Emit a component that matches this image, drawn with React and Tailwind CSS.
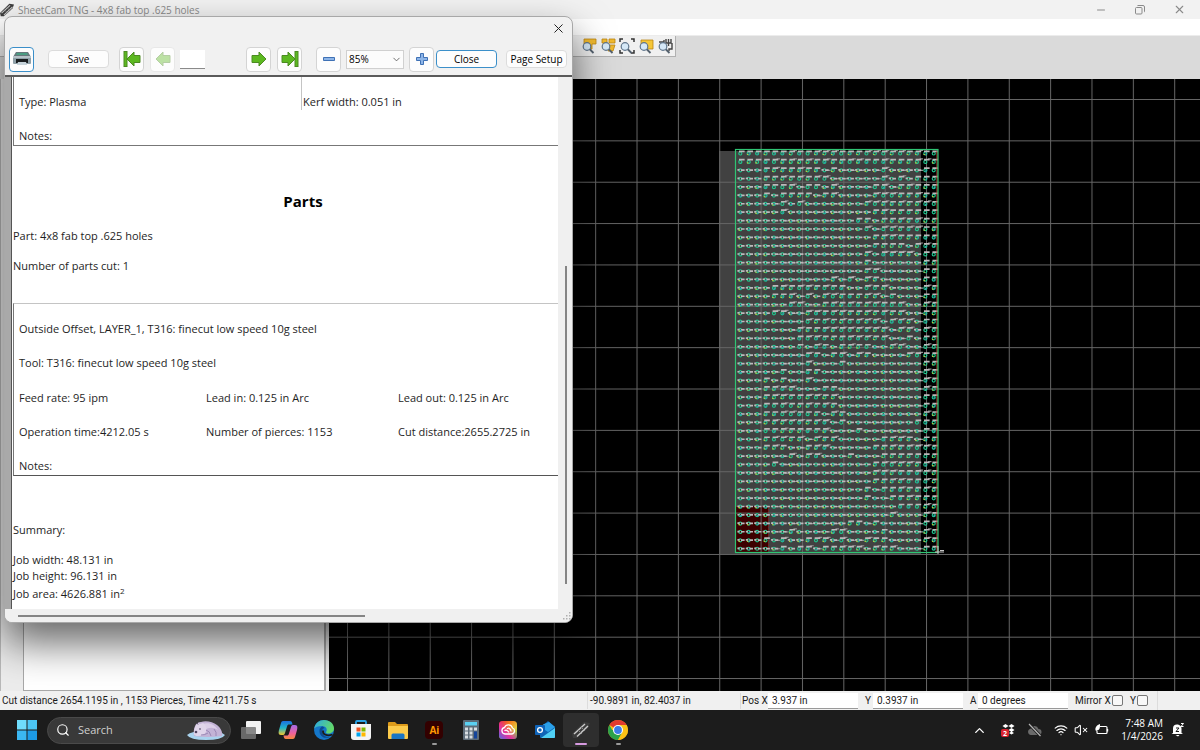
import { Minus, X, ChevronUp, ChevronDown, Wifi, VolumeX, CloudOff, Search } from 'lucide-react'

const COLS = 24
const ROWS = 48
const PITCH = 8.41

const noise = (a, b) => {
  const n = Math.sin(a * 12.9898 + b * 78.233) * 43758.5453
  return n - Math.floor(n)
}

// label ticks sit above the hole in some places and beside it in others
function buildHoles() {
  const out = { rings: '', labels: '', joins: '', yellow: '', blue: '' }
  for (let r = 0; r < ROWS; r++) {
    for (let c = 0; c < COLS; c++) {
      const x = 411 + c * PITCH
      const y = 74.5 + r * PITCH
      const wave = Math.sin(c / 3.2 + r / 5) + Math.cos(r / 2.4 - c / 7) + (noise(r + 3, c) - 0.5) * 2
      const above = r < 2 || c > 21 || (c > 2 && wave > 0.3)
      out.rings += `M${x - 1.2} ${y}a1.5 1.5 0 1 0 3 0a1.5 1.5 0 1 0 -3 0`
      out.labels += above ? `M${x - 1} ${y - 2.2}h5.6` : `M${x - 2.6} ${y - 0.4}h2.2M${x + 1} ${y - 0.2}h3.6`
      if (c > 3 && c < 23 && noise(r, c) > 0.5) out.joins += `M${x + 3} ${y - (above ? 3 : 0)}h3.5`
      if (noise(c, r) > 0.5) out.yellow += `M${x - 1.5} ${y + 1}h1.6`
      if (noise(c + 9, r) > 0.6) out.blue += `M${x} ${y + 0.5}h1.6`
    }
  }
  return out
}

const HOLES = buildHoles()

function Canvas() {
  return (
    <svg className="block h-full w-full" role="img" aria-label="Part layout">
      <defs>
        <pattern id="grid" x="18" y="20" width="41.36" height="41.36" patternUnits="userSpaceOnUse">
          <path d="M0.5 0V41.36M0 0.5H41.36" stroke="#666" strokeWidth="1" fill="none" />
        </pattern>
      </defs>
      <rect width="100%" height="100%" fill="#000" />
      <rect x="390" y="72" width="202" height="403" fill="#414141" />
      <rect x="407" y="427" width="32" height="46" fill="#3d0000" />
      <path d="M407 427.5H439.5V473" stroke="#7a2020" strokeDasharray="2 1" fill="none" />
      <rect width="100%" height="100%" fill="url(#grid)" />
      <path d={HOLES.joins} stroke="#8f8f8f" strokeWidth="1.2" fill="none" />
      <path d={HOLES.rings} stroke="#1fc48c" strokeWidth="1.2" fill="none" />
      <path d={HOLES.labels} stroke="#bcb8ba" strokeWidth="1.7" fill="none" />
      <path d={HOLES.yellow} stroke="#b5c93c" strokeWidth="1.2" fill="none" />
      <path d={HOLES.blue} stroke="#2c9bb8" strokeWidth="1.2" fill="none" />
      <path d="M608 72V473" stroke="#c23a32" strokeWidth="1" />
      <rect x="406.5" y="70.5" width="202.500" height="403" fill="none" stroke="#2fc473" strokeWidth="1.2" />
      <path d="M609 467v8M606 473h9M611 471.5h4" stroke="#c8c8c8" strokeWidth="1" fill="none" />
    </svg>
  )
}

function SheetCamIcon({ size = 14 }) {
  return (
    <svg width={size} height={size} viewBox="0 0 18 18">
      <path d="M0 13 12 1l6 1-2 5L5 17H1z" fill="#3c3c3c" />
      <path d="M2 13 13 3M5 15.500 16 5" stroke="#c9c9c9" strokeWidth="1.400" />
      <path d="m6 9 4 4M9 6l4 4" stroke="#8a8a8a" strokeWidth="1" />
    </svg>
  )
}

function PrinterIcon() {
  return (
    <svg width="20" height="16" viewBox="0 0 20 16">
      <path d="M4 1h12l3 5H1z" fill="#66777c" />
      <path d="M5 2h10l1 2H4z" fill="#4a9c82" />
      <rect x="1" y="5" width="18" height="8" rx="1" fill="#8fa0a8" />
      <path d="M1 6h18" stroke="#dce4e8" />
      <rect x="4" y="8" width="12" height="4" fill="#1a1e20" />
      <path d="M6 11h8l1 3H5z" fill="#c6d3da" />
    </svg>
  )
}

function GreenArrow({ left, bar }) {
  return (
    <svg width="18" height="18" viewBox="0 0 18 18">
      <g transform={left ? 'translate(18 0) scale(-1 1)' : undefined} stroke="#4c8a22" strokeWidth="1">
        <path d={bar ? 'M1 5.500h6V2l7 7-7 7v-3.500H1z' : 'M2 5.500h7V2l7 7-7 7v-3.500H2z'} fill="#5cb820" />
        {bar && <rect x="14" y="1.5" width="3" height="15" fill="#5cb820" />}
      </g>
    </svg>
  )
}

function PlusMinus({ plus }) {
  return (
    <svg width="14" height="14" viewBox="0 0 14 14">
      <path
        d={plus ? 'M5.5 1.5h3v4h4v3h-4v4h-3v-4h-4v-3h4z' : 'M1.5 5.5h11v3h-11z'}
        fill="#8db5e8" stroke="#3f71b5"
      />
    </svg>
  )
}

const ZOOM_SHAPES = {
  part: <path d="M3 1h12v5h-4v5H7V6H3z" fill="#f0b92e" stroke="#b98412" strokeWidth=".8" />,
  parts: <path d="M2 1h5v4H2zM9 1h6v4H9zM8 7h7l-2 6H8z" fill="#f0b92e" stroke="#b98412" strokeWidth=".8" />,
  extents: <path d="M1 4V1h3M12 1h3v3M15 12v3h-3M4 15H1v-3" fill="none" stroke="#333" strokeWidth="1.5" />,
  sheet: <path d="M3 2h12v9H3z" fill="#f5c637" stroke="#b98412" strokeWidth=".8" />,
  machine: <path d="M2 4h5V2M9 1v4h5V1M11.500 1v7M15 5v6h-3v2" fill="none" stroke="#444" strokeWidth="1.400" />,
}

function ZoomIcon({ kind }) {
  return (
    <svg width="16" height="16" viewBox="0 0 16 16">
      {ZOOM_SHAPES[kind]}
      <path d="m8.500 11 4 4" stroke="#54616e" strokeWidth="1.8" />
      <circle cx="6" cy="8.500" r="3.800" fill="#d5e8f7" stroke="#60768c" strokeWidth="1.200" />
    </svg>
  )
}

const iconBtn = 'flex h-[25px] w-[25px] shrink-0 items-center justify-center rounded border bg-[#fdfdfd]'
const textBtn = 'h-[18px] w-[61px] shrink-0 whitespace-nowrap rounded border bg-[#fdfdfd] text-[10px] leading-4 text-black'

function PreviewToolbar() {
  return (
    <div className="flex h-[34px] items-center border-b-2 border-[#5a5a5a] pl-1">
      <button aria-label="Print" className={`${iconBtn} border-[#3b8fc9]`}><PrinterIcon /></button>
      <button className={`${textBtn} ml-3.5 border-[#dcdcdc]`}>Save</button>
      <button aria-label="First page" className={`${iconBtn} ml-2.5 border-[#d4d4d4]`}><GreenArrow left bar /></button>
      <button aria-label="Previous page" disabled className={`${iconBtn} ml-1.5 border-[#e8e8e8]`}>
        <span className="opacity-40"><GreenArrow left /></span>
      </button>
      <input aria-label="Page" className="ml-[5px] h-[19px] w-[25px] border-b border-[#8a8a8a] bg-white text-[10px]" />
      <button aria-label="Next page" className={`${iconBtn} ml-[41px] border-[#d4d4d4]`}><GreenArrow /></button>
      <button aria-label="Last page" className={`${iconBtn} ml-1.5 border-[#d4d4d4]`}><GreenArrow bar /></button>
      <button aria-label="Zoom out" className={`${iconBtn} ml-3.5 border-[#d4d4d4]`}><PlusMinus /></button>
      <div className="relative ml-[5px] shrink-0">
        <select aria-label="Zoom" className="block h-[19px] w-[58px] appearance-none border border-[#d0d0d0] bg-[#fcfcfc] pl-0.5 text-[10px] leading-4 text-black">
          <option>85%</option>
        </select>
        <ChevronDown size={11} strokeWidth={1.8} className="pointer-events-none absolute right-0.5 top-1 text-[#555]" />
      </div>
      <button aria-label="Zoom in" className={`${iconBtn} ml-[5px] border-[#d4d4d4]`}><PlusMinus plus /></button>
      <button className={`${textBtn} ml-0.5 border-[#3b8fc9]`}>Close</button>
      <button className={`${textBtn} ml-[9px] border-[#dcdcdc]`}>Page Setup</button>
    </div>
  )
}

function Report() {
  return (
    <div className="min-w-0 flex-1 border-l border-[#555] bg-white pl-px text-[11px] leading-4 text-[#1e1e1e]">
      <div className="border-b border-l border-[#777] pl-[5px]">
        <div className="grid grid-cols-[282px_1fr]">
          <p className="pt-[17px]">Type: Plasma</p>
          <p className="border-l border-[#c4c4c4] pl-px pt-[17px]">Kerf width: 0.051 in</p>
        </div>
        <p className="mt-[18px] pb-px">Notes:</p>
      </div>

      <h2 className="mt-[43px] pl-[35px] text-center text-[15px] font-bold leading-6 text-black">Parts</h2>
      <p className="mt-[15px]">Part: 4x8 fab top .625 holes</p>
      <p className="mt-3.5">Number of parts cut: 1</p>

      <div className="mt-[29px] space-y-[18px] border border-r-0 border-b-[#555] border-l-[#777] border-t-[#c4c4c4] pl-[5px] pt-[17px]">
        <p>Outside Offset, LAYER_1, T316: finecut low speed 10g steel</p>
        <p>Tool: T316: finecut low speed 10g steel</p>
        <div className="grid grid-cols-[187px_192px_1fr] gap-y-[18px] pt-px">
          <p>Feed rate: 95 ipm</p>
          <p>Lead in: 0.125 in Arc</p>
          <p>Lead out: 0.125 in Arc</p>
          <p>Operation time:4212.05 s</p>
          <p>Number of pierces: 1153</p>
          <p>Cut distance:2655.2725 in</p>
        </div>
        <p className="pb-px">Notes:</p>
      </div>

      <p className="mt-[46px]">Summary:</p>
      <p className="mt-3.5">Job width: 48.131 in</p>
      <p>Job height: 96.131 in</p>
      <p className="mt-0.5">Job area: 4626.881 in<sup className="text-[8px] leading-none">2</sup></p>
    </div>
  )
}

function PreviewDialog() {
  return (
    <section
      aria-label="Print preview"
      className="absolute left-1 top-4 flex h-[607px] w-[569px] flex-col overflow-hidden rounded-lg border border-[#a8a8a8] bg-[#f1f1f1] shadow-[0_20px_40px_rgba(0,0,0,0.6)]"
    >
      <div className="flex h-[26px] shrink-0 items-end justify-end pr-1.5 pb-[7px]">
        <button aria-label="Close window"><X size={15} strokeWidth={1.6} className="text-[#222]" /></button>
      </div>
      <PreviewToolbar />
      <div className="flex min-h-0 flex-1">
        <div className="w-1.5 bg-[#a9a9a9]" />
        <Report />
        <div className="w-3.5 bg-[#f0f0f0] pl-[7px] pt-[189px]">
          <div className="h-[318px] w-0.5 bg-[#858585]" />
        </div>
      </div>
      <div className="flex h-[13px] shrink-0 items-center justify-between bg-[#f0f0f0] pl-[13px]">
        <div className="h-0.5 w-[347px] bg-[#858585]" />
        <svg width="10" height="10" viewBox="0 0 10 10" fill="#b0b0b0">
          <path d="M7 1h1.500v1.500H7zM4 4h1.500v1.500H4zM7 4h1.500v1.500H7zM1 7h1.500v1.500H1zM4 7h1.500v1.500H4zM7 7h1.500v1.500H7z" />
        </svg>
      </div>
    </section>
  )
}

function StatusField({ label, value, width }) {
  return (
    <label className="flex items-center">
      <span className={width}>{label}</span>
      <input defaultValue={value} className="h-4 w-[90px] border-b border-[#999] bg-white pl-1 pt-px" />
    </label>
  )
}

function StatusBar() {
  return (
    <footer className="flex h-[19px] shrink-0 items-center whitespace-nowrap bg-[#f0f0f0] font-['Roboto',sans-serif] text-[10px] leading-4 text-[#1a1a1a]">
      <div className="flex-1 pl-0.5 pt-px">Cut distance 2654.1195 in , 1153 Pierces, Time 4211.75 s</div>
      <div className="w-[153px] border-l border-[#dcdcdc] pl-0.5 pt-px">-90.9891 in, 82.4037 in</div>
      <div className="flex w-[417px] gap-[7px] border-l border-[#dcdcdc] pl-px">
        <StatusField label="Pos X" value="3.937 in" width="w-[26px]" />
        <StatusField label="Y" value="0.3937 in" width="w-2" />
        <StatusField label="A" value="0 degrees" width="w-2" />
        <label className="flex items-center">
          <span className="w-[37px]">Mirror X</span>
          <input type="checkbox" className="h-[11px] w-[11px] appearance-none rounded-[2px] border border-[#777] bg-[#f8f8f8]" />
        </label>
        <label className="flex items-center">
          <span className="w-[7px]">Y</span>
          <input type="checkbox" className="h-[11px] w-[11px] appearance-none rounded-[2px] border border-[#777] bg-[#f8f8f8]" />
        </label>
      </div>
      <div className="h-full w-[43px] border-l border-[#dcdcdc]" />
    </footer>
  )
}

const APPS = [
  { name: 'Task view', icon: (
    <svg width="20" height="20" viewBox="0 0 20 20">
      <rect x="5" y="1" width="15" height="13" rx="1" fill="#f2f2f2" />
      <rect x="0" y="7" width="15" height="12" rx="1" fill="#777" fillOpacity=".85" />
    </svg>
  ) },
  { name: 'Copilot', icon: (
    <svg width="20" height="20" viewBox="0 0 20 20">
      <defs>
        <linearGradient id="cpA" x1="0" y1="0" x2="0" y2="1"><stop stopColor="#1b6fe0" /><stop offset=".5" stopColor="#22b6c8" /><stop offset="1" stopColor="#f2c52c" /></linearGradient>
        <linearGradient id="cpB" x1="0" y1="0" x2="0" y2="1"><stop stopColor="#a36be8" /><stop offset=".6" stopColor="#f0619a" /><stop offset="1" stopColor="#f58a3c" /></linearGradient>
      </defs>
      <path d="M5 1h7c2 0 2 1.500 2.500 3.500H11c-1 0-1.600.6-2 2L7 13c-.5 1.500-1 2-2.500 2H3C0 15 .5 12 1 10l2-7c.4-1.300 1-2 2-2z" fill="url(#cpA)" />
      <path d="M15 19H8c-2 0-2-1.500-2.500-3.500H9c1 0 1.600-.6 2-2L13 7c.5-1.500 1-2 2.500-2H17c3 0 2.500 3 2 5l-2 7c-.4 1.300-1 2-2 2z" fill="url(#cpB)" />
    </svg>
  ) },
  { name: 'Edge', icon: (
    <svg width="20" height="20" viewBox="0 0 20 20">
      <defs>
        <linearGradient id="edgeA" x1="0" y1="0" x2="1" y2=".4"><stop stopColor="#2aa7e8" /><stop offset="1" stopColor="#63d96a" /></linearGradient>
      </defs>
      <circle cx="10" cy="10" r="10" fill="#1577c9" />
      <path d="M0 9C1 3 5 0 10 0c6 0 10 4 10 8.500 0 3.500-3 5-5.500 5-2 0-3-.8-2.300-1.800C14 9 11.500 6 8 6 4 6 1 7 0 9z" fill="url(#edgeA)" />
      <path d="M8 6.500C5 8 4.500 13 7.500 16c2 2 5 2.500 8.500 1-5 .8-8-2.500-8-5.500 0-2 1-3 2.500-3.500-.5-1-1.500-1.500-2.500-1.500z" fill="#0c4a92" />
      <path d="M9 10.500c-.5 4 4 6 9.500 4" stroke="#1c1c1c" strokeWidth="1.800" fill="none" />
    </svg>
  ) },
  { name: 'Store', icon: (
    <svg width="20" height="20" viewBox="0 0 20 20">
      <path d="M5 5V2q0-1 1-1h8q1 0 1 1v3" stroke="#2ba3e6" strokeWidth="1.800" fill="none" />
      <path d="M0 4h20v13q0 3-3 3H3q-3 0-3-3z" fill="#f4f4f4" />
      <path d="M5.500 7.500h4v4h-4z" fill="#f25022" /><path d="M10.500 7.500h4v4h-4z" fill="#7fba00" />
      <path d="M5.500 12.500h4v4h-4z" fill="#00a4ef" /><path d="M10.500 12.500h4v4h-4z" fill="#ffb900" />
    </svg>
  ) },
  { name: 'File Explorer', icon: (
    <svg width="20" height="20" viewBox="0 0 20 20">
      <path d="M0 3q0-1 1-1h6l2 2h10q1 0 1 1v5H0z" fill="#dd9b1b" />
      <path d="M0 6h20v12q0 1-1 1H1q-1 0-1-1z" fill="#fccb4b" />
      <path d="M3.500 19v-4q0-1.500 1.500-1.500h10q1.500 0 1.500 1.500v4z" fill="#1b76c4" />
    </svg>
  ) },
  { name: 'Illustrator', running: true, icon: (
    <span className="flex h-[18px] w-[18px] items-center justify-center rounded bg-[#330000] text-[10px] font-bold leading-none text-[#ff9a00]">Ai</span>
  ) },
  { name: 'Calculator', icon: (
    <svg width="16" height="20" viewBox="0 0 16 20">
      <rect width="16" height="20" rx="1" fill="#5c6b78" />
      <rect x="2" y="2" width="12" height="3.500" fill="#5ad0f2" />
      <path d="M2 7.500h3v3H2zM6.500 7.500h3v3h-3zM11 7.500h3v3h-3zM2 11.500h3v3H2zM6.500 11.500h3v3h-3zM2 15.500h3v3H2zM6.500 15.500h3v3h-3z" fill="#d7dde2" />
      <path d="M11 11.500h3v7h-3z" fill="#14459c" />
    </svg>
  ) },
  { name: 'Creative Cloud', icon: (
    <svg width="18" height="18" viewBox="0 0 18 18">
      <defs>
        <linearGradient id="ccA" x1="0" y1="0" x2="1" y2="1"><stop stopColor="#e8232a" /><stop offset=".35" stopColor="#f5801e" /><stop offset=".65" stopColor="#e5c83a" /><stop offset="1" stopColor="#3fbf6a" /></linearGradient>
        <linearGradient id="ccB" x1="1" y1="0" x2="0" y2="1"><stop offset=".3" stopColor="#e6309e" stopOpacity="0" /><stop offset=".65" stopColor="#e6309e" /><stop offset="1" stopColor="#4a6be8" /></linearGradient>
      </defs>
      <rect width="18" height="18" rx="3.500" fill="url(#ccA)" />
      <rect width="18" height="18" rx="3.500" fill="url(#ccB)" />
      <path d="M6 13a3.300 3.300 0 0 1-.5-6.500A4.200 4.200 0 0 1 13.500 7 3.100 3.100 0 0 1 12.500 13z" stroke="#fff" strokeWidth="1.300" fill="none" />
      <path d="M5.500 9.800q1.500-1.500 3 0l1.500 1.500M8 7.800q1.800-1.200 3 .2t1 2.500" stroke="#fff" strokeWidth="1.200" fill="none" />
    </svg>
  ) },
  { name: 'Outlook', icon: (
    <svg width="20" height="18" viewBox="0 0 20 18">
      <path d="M5 7 13 0l7 6v10q0 1-1 1H6q-1 0-1-1z" fill="#1066b5" />
      <path d="M8 3.500 14 1l6 5-7 5-6-4z" fill="#2ba0e8" />
      <path d="M6 17 20 7v9q0 1-1 1z" fill="#50d0f5" />
      <rect y="4" width="10" height="10" rx="1" fill="#0f63b8" />
      <circle cx="5" cy="9" r="2.400" stroke="#fff" strokeWidth="1.300" fill="none" />
    </svg>
  ) },
  { name: 'SheetCam TNG', active: true, icon: <SheetCamIcon size={18} /> },
  { name: 'Chrome', running: true, icon: (
    <svg width="20" height="20" viewBox="0 0 20 20">
      <circle cx="10" cy="10" r="10" fill="#fbc116" />
      <path d="M10 10 1.340 5A10 10 0 0 1 18.660 5H10z" fill="#e33b2e" />
      <path d="M1.340 5A10 10 0 0 0 10 20l4.300-7.500L10 10H4.200z" fill="#2ba24c" />
      <path d="M10 5h8.660A10 10 0 0 1 10 20l4.300-7.500z" fill="#fbc116" />
      <circle cx="10" cy="10" r="5" fill="#fff" />
      <circle cx="10" cy="10" r="3.900" fill="#3b7de8" />
    </svg>
  ) },
]

function PolarBear() {
  return (
    <svg width="40" height="21" viewBox="0 0 40 21">
      <path d="M1 15q4-4 19-4t19 4q-3 5-19 5T1 15z" fill="#a9d3ee" />
      <path d="M8 16C7 9 9 2 15 2c5-2 12 0 16 3 4 3 6 8 5 11q-14 2-28 0z" fill="#c3b3d6" />
      <path d="M17 4c6-2 12 1 15 6-5-3-9-3-13 0z" fill="#dccfe8" />
      <path d="M8 14C8 10 9 5 12 3l2 1 3-1c3 2 4 6 3 9-2 3-5 4-8 4-2 0-4-.5-4-2z" fill="#e0d5ea" />
      <path d="M20 10q4 1 5 6M28 9q3 3 2 7M15 15q4 0 7-2" stroke="#9a88b5" fill="none" />
      <circle cx="10" cy="12" r="1.300" fill="#4d4360" />
      <path d="M13 9h2M11 3l1 1.500" stroke="#4d4360" />
    </svg>
  )
}

function Taskbar() {
  return (
    <nav className="flex h-10 shrink-0 items-center bg-[#1c1c1c] text-white">
      <button aria-label="Start" className="ml-[17px]">
        <svg width="20" height="20" viewBox="0 0 20 20">
          <path d="M0 0h9.500v9.500H0z" fill="#6fdcfb" /><path d="M10.500 0H20v9.500h-9.500z" fill="#4cc6f5" />
          <path d="M0 10.500h9.500V20H0z" fill="#3bb7f2" /><path d="M10.500 10.500H20V20h-9.500z" fill="#1c9be8" />
        </svg>
      </button>
      <label className="ml-2.5 flex h-[27px] w-[184px] items-center rounded-full border border-[#4a4a4a] bg-[#393939] pl-2 pr-1">
        <Search size={14} className="shrink-0" />
        <input placeholder="Search" aria-label="Search" className="ml-2 w-[100px] bg-transparent text-[11px] placeholder:text-[#cfcfcf]" />
        <span className="ml-auto shrink-0"><PolarBear /></span>
      </label>
      <div className="ml-0.5 flex w-[403px] justify-between">
        {APPS.map(a => (
          <button key={a.name} aria-label={a.name}
            className={`relative flex h-[34px] w-9 items-center justify-center rounded ${a.active ? 'bg-[#2e2e2e]' : ''}`}>
            {a.icon}
            {a.running && <span className="absolute bottom-0.5 left-4 h-0.5 w-[5px] rounded-full bg-[#9a9a9a]" />}
            {a.active && <span className="absolute bottom-0.5 left-3 h-0.5 w-3 rounded-full bg-[#d69ae0]" />}
          </button>
        ))}
      </div>
      <div className="ml-auto flex items-center pr-4">
        <ChevronUp size={15} strokeWidth={2.2} />
        <svg className="ml-3.5" width="14" height="14" viewBox="0 0 14 14">
          <path d="m4.500 1 3 2-3 2-3-2zM10.500 1l3 2-3 2-3-2zM10.500 5l3 2-3 2-3-2zM8 10l2.500-1.500L13 10l-2.500 1.500z" fill="#fff" />
          <rect y="6" width="8" height="8" rx="2" fill="#d8232f" />
          <text x="4" y="12.500" textAnchor="middle" fontSize="7" fontWeight="bold" fill="#fff">2</text>
        </svg>
        <svg className="ml-3" width="15" height="14" viewBox="0 0 15 14">
          <path d="M4 12a3.200 3.200 0 0 1-.5-6.300A4.300 4.300 0 0 1 11.500 6 3 3 0 0 1 11.500 12z" fill="#6a6a6a" />
          <path d="m2 1 11.500 12" stroke="#1c1c1c" strokeWidth="3" />
          <path d="m2 1 11.500 12" stroke="#b5b5b5" strokeWidth="1.200" />
        </svg>
        <Wifi size={14} className="ml-3" strokeWidth={2} />
        <VolumeX size={14} className="ml-1.5" strokeWidth={1.8} />
        <svg className="ml-1.5" width="15" height="14" viewBox="0 0 15 14">
          <path d="M6 3.500h6q1 0 1 1v5q0 1-1 1H4q-1 0-1-1V8" stroke="#fff" strokeWidth="1.200" fill="none" />
          <path d="M13.500 6v2.500" stroke="#fff" strokeWidth="1.400" />
          <path d="M2 8C0 5 3 2 6 1c0 4 0 6-4 7z" fill="#fff" />
        </svg>
        <div className="ml-3 text-right text-[10px] leading-[13px]">
          <p>7:48 AM</p>
          <p>1/4/2026</p>
        </div>
        <svg className="ml-2" width="13" height="14" viewBox="0 0 13 14">
          <path d="M2 10V5.500Q2 1.500 6 1.500h1q3.500 1 3.500 4V10l1.500 1H.5zM4.500 12h4L7 13.500z" fill="#fff" />
          <path d="M5 5h3L5 8.500h3" stroke="#1c1c1c" fill="none" />
          <path d="M10 .5h2.500L10 3.500h2.500" stroke="#fff" fill="none" />
        </svg>
      </div>
    </nav>
  )
}

export default function App() {
  return (
    <div className="relative flex h-screen flex-col overflow-hidden bg-[#f0f0f0] font-['Open_Sans','Noto_Sans',sans-serif]">
      <header className="flex h-[19px] shrink-0 items-center bg-[#f2f2f2] text-[#8a8a8a]">
        <SheetCamIcon />
        <h1 className="ml-1 text-[10px] leading-4">SheetCam TNG - 4x8 fab top .625 holes</h1>
        <div className="ml-auto flex gap-7 pr-3.5">
          <button aria-label="Minimize"><Minus size={12} strokeWidth={2} /></button>
          <button aria-label="Restore">
            <svg width="10" height="10" viewBox="0 0 10 10" fill="none" stroke="currentColor">
              <rect x="0.500" y="2.500" width="6.500" height="6.500" rx="1" />
              <path d="M2.500 1q0-.5.500-.5h5q1.500 0 1.500 1.500v4.500q0 .5-.5.500" />
            </svg>
          </button>
          <button aria-label="Exit"><X size={13} strokeWidth={2} /></button>
        </div>
      </header>
      <div className="h-4 shrink-0 bg-white" />
      <div className="h-11 shrink-0 border-t border-[#ececec] bg-[#dadada]">
        <div className="flex h-[21px] w-[676px] items-center justify-end gap-[3px] border-b border-r border-[#b0b0b0] bg-[#f0f0f0] pr-0.5">
          {Object.keys(ZOOM_SHAPES).map(k => (
            <button key={k} aria-label={`Zoom to ${k}`}><ZoomIcon kind={k} /></button>
          ))}
        </div>
      </div>
      <main className="flex min-h-0 flex-1">
        <div className="flex w-[329px] shrink-0 border-l border-[#b8b8b8] bg-[#ececec] pl-[22px] pr-[3px]">
          <div className="flex-1 border border-r-2 border-[#a8a8a8] bg-white" />
        </div>
        <div className="min-w-0 flex-1"><Canvas /></div>
      </main>
      <StatusBar />
      <Taskbar />
      <PreviewDialog />
    </div>
  )
}
